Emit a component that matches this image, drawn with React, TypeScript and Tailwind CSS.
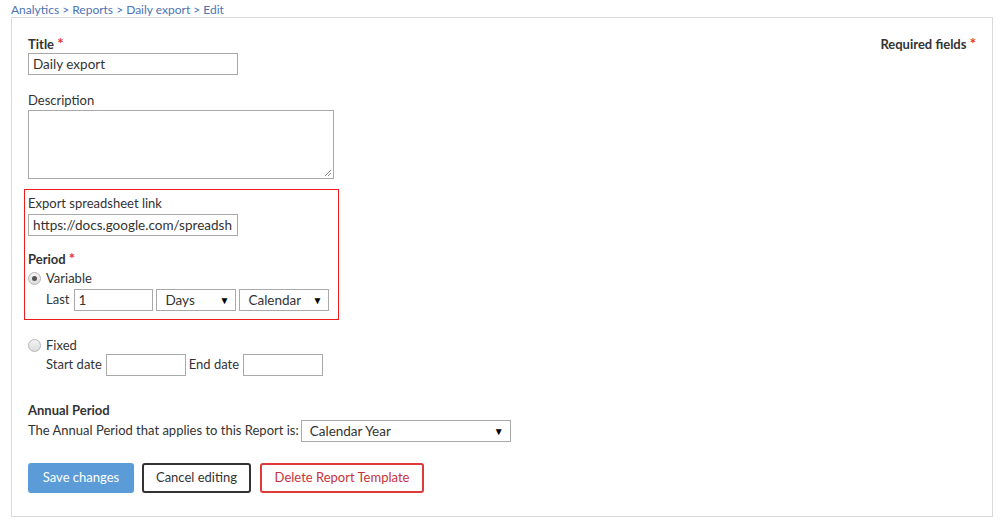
import React from "react";

const font = { fontFamily: 'Lato, "Noto Sans", sans-serif' };

function Select({ value, w }: { value: string; w: string }) {
  return (
    <div className={`${w} h-[22px] border border-[#a9a9a9] bg-white flex items-center justify-between pl-[8px] pr-[6px] text-[13.5px] text-[#333]`}>
      <span>{value}</span>
      <span className="text-[10px] leading-none text-black">▼</span>
    </div>
  );
}

function Radio({ checked }: { checked?: boolean }) {
  return (
    <span className="w-[13px] h-[13px] rounded-full border border-[#b5b5b5] bg-gradient-to-b from-[#f4f4f4] to-[#dcdcdc] flex items-center justify-center">
      {checked && <span className="w-[5px] h-[5px] rounded-full bg-[#555]" />}
    </span>
  );
}

const Star = () => <span className="text-[#e8322a] text-[15px] leading-none">*</span>;

export default function App() {
  return (
    <div className="w-[1001px] h-[531px] bg-white text-[13px] text-[#333]" style={font}>
      <div className="pl-[11px] pt-[2px] h-[17px] text-[12px] leading-[16px] text-[#4b73b5]">
        Analytics &gt; Reports &gt; Daily export &gt; Edit
      </div>
      <div className="ml-[11px] w-[982px] h-[500px] border border-[#d9d9d9] pl-[16px] pr-[16px] pt-[18px] relative">
        <div className="absolute right-[16px] top-[18px] h-[16px] font-bold leading-[16px]">
          Required fields <Star />
        </div>
        <div className="h-[16px] font-bold leading-[16px]">
          Title <Star />
        </div>
        <div className="mt-[1px] w-[210px] h-[22px] border border-[#a9a9a9] flex items-center px-[4px] text-[13.5px]">Daily export</div>

        <div className="mt-[17px] leading-[16px]">Description</div>
        <div className="mt-[2px] w-[306px] h-[69px] border border-[#a9a9a9] relative">
          <svg className="absolute right-[1px] bottom-[1px]" width="8" height="8" viewBox="0 0 8 8">
            <path d="M7 1 L1 7 M7 4 L4 7" stroke="#888" strokeWidth="1" />
          </svg>
        </div>

        <div className="mt-[10px] ml-[-4px] w-[315px] border border-[#ee1c1c] pl-[3px] pt-[5px] pb-[8px]">
          <div className="leading-[16px]">Export spreadsheet link</div>
          <div className="mt-[3px] w-[210px] h-[22px] border border-[#a9a9a9] flex items-center px-[4px] whitespace-nowrap text-[13.5px]">
            https://docs.google.com/spreadsh
          </div>
          <div className="mt-[15px] h-[16px] font-bold leading-[16px]">
            Period <Star />
          </div>
          <div className="mt-[3px] flex items-center gap-[5px] leading-[16px]">
            <Radio checked />
            <span>Variable</span>
          </div>
          <div className="mt-[3px] ml-[18px] flex items-center">
            <span className="mr-[5px]">Last</span>
            <div className="w-[79px] h-[22px] border border-[#a9a9a9] flex items-center px-[3px] text-[13.5px]">1</div>
            <div className="ml-[3px]"><Select value="Days" w="w-[80px]" /></div>
            <div className="ml-[3px]"><Select value="Calendar" w="w-[90px]" /></div>
          </div>
        </div>

        <div className="mt-[17px] flex items-center gap-[5px] leading-[16px]">
          <Radio />
          <span>Fixed</span>
        </div>
        <div className="mt-[1px] ml-[18px] flex items-center">
          <span className="mr-[4px]">Start date</span>
          <div className="w-[80px] h-[22px] border border-[#a9a9a9]" />
          <span className="ml-[3px] mr-[4px]">End date</span>
          <div className="w-[80px] h-[22px] border border-[#a9a9a9]" />
        </div>

        <div className="mt-[26px] font-bold leading-[16px]">Annual Period</div>
        <div className="mt-[2px] flex items-center">
          <span className="mr-[2px]">The Annual Period that applies to this Report is:</span>
          <Select value="Calendar Year" w="w-[210px]" />
        </div>

        <div className="mt-[21px] flex items-center">
          <div className="w-[106px] h-[30px] rounded-[3px] bg-[#5b9bd8] text-white flex items-center justify-center">Save changes</div>
          <div className="ml-[8px] w-[109px] h-[30px] rounded-[3px] border-2 border-[#333] flex items-center justify-center">Cancel editing</div>
          <div className="ml-[9px] w-[164px] h-[30px] rounded-[3px] border-2 border-[#dd3a3a] text-[#c8323a] flex items-center justify-center">Delete Report Template</div>
        </div>
      </div>
    </div>
  );
}
